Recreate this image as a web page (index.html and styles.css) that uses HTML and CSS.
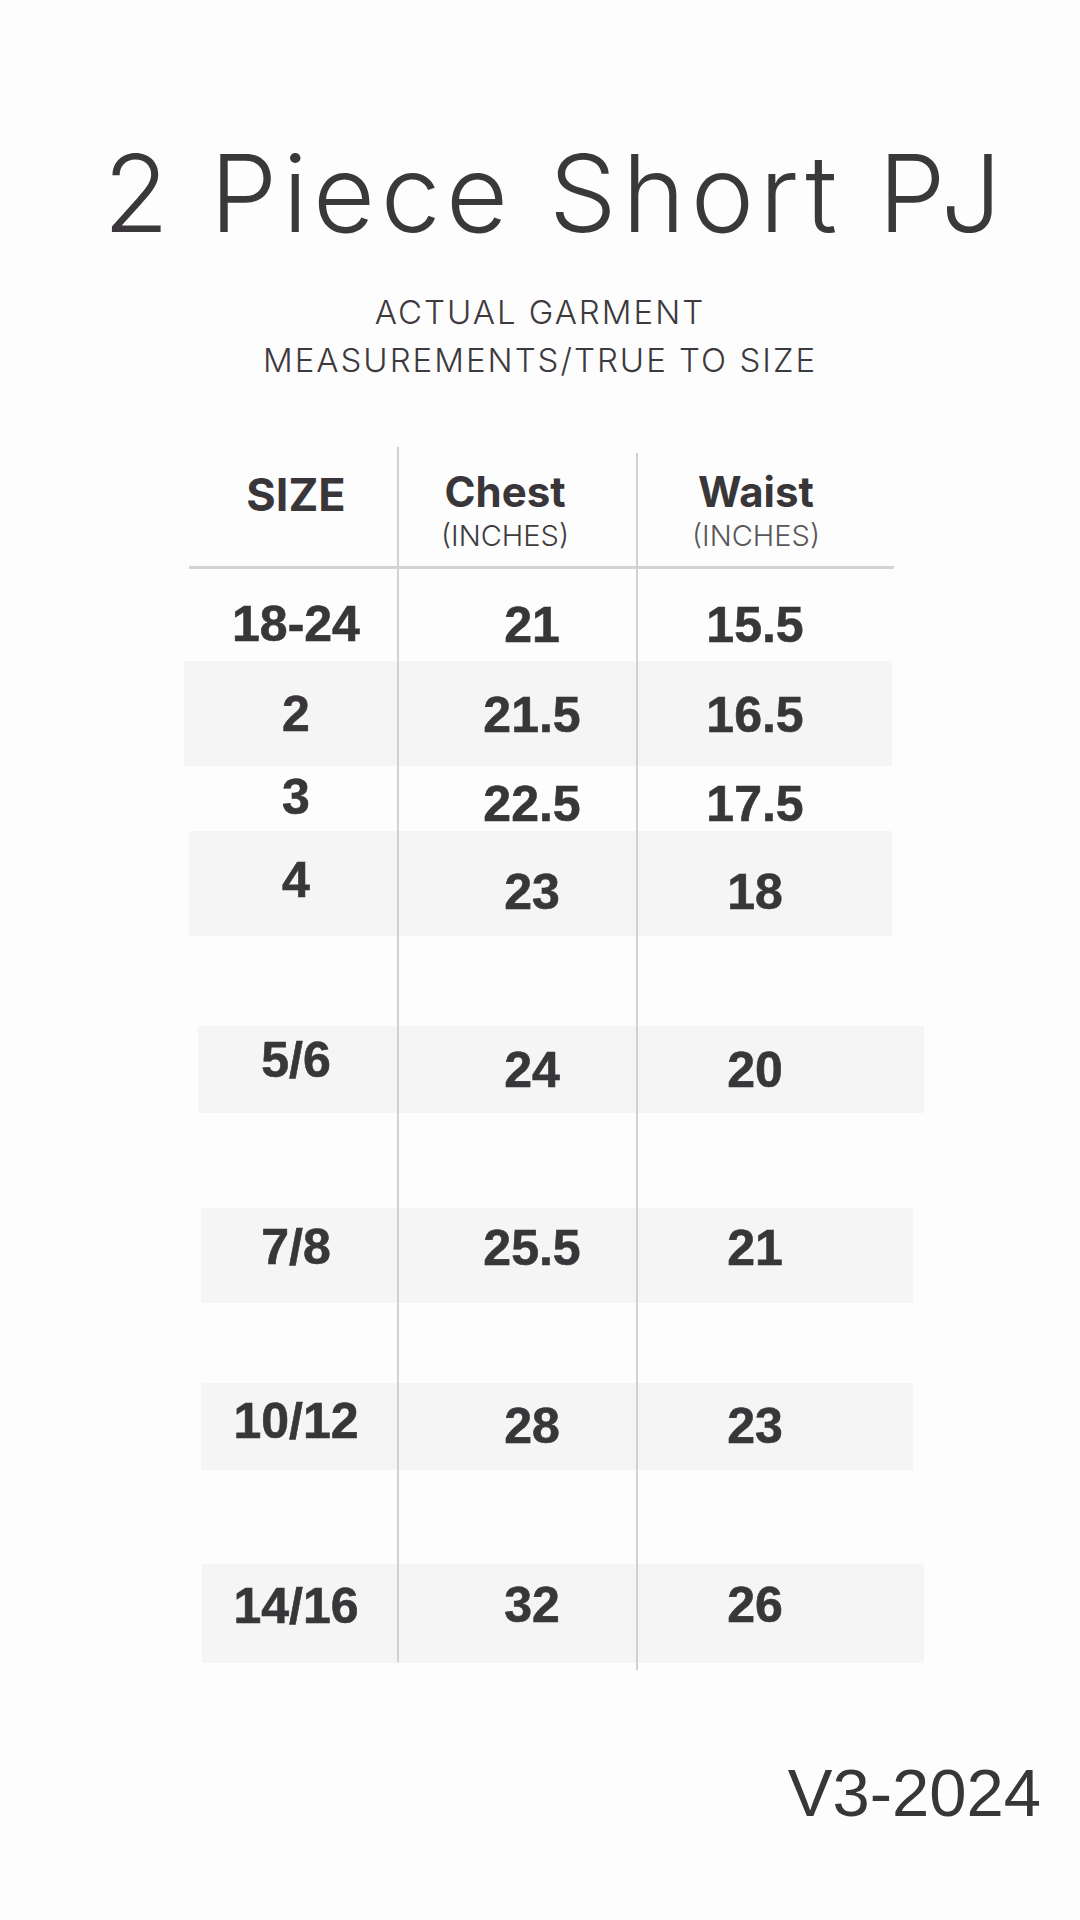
FILE: index.html
```html
<!DOCTYPE html>
<html lang="en">
<head>
<meta charset="utf-8">
<title>2 Piece Short PJ</title>
<link rel="stylesheet" href="styles.css">
</head>
<body>
<main class="page">
  <h1 class="title">2 Piece Short PJ</h1>
  <p class="subtitle">ACTUAL GARMENT<br>MEASUREMENTS/TRUE TO SIZE</p>

  <section class="table">
    <div class="vline vline-1"></div>
    <div class="vline vline-2"></div>

    <div class="head">
      <div class="hcell hsize">SIZE</div>
      <div class="hcell hchest"><span class="hname">Chest</span><span class="unit">(INCHES)</span></div>
      <div class="hcell hwaist"><span class="hname">Waist</span><span class="unit unit-light">(INCHES)</span></div>
    </div>
    <div class="head-rule"></div>

    <div class="row r1"><div class="c size">18-24</div><div class="c chest">21</div><div class="c waist">15.5</div></div>
    <div class="row r2 shade"><div class="c size">2</div><div class="c chest">21.5</div><div class="c waist">16.5</div></div>
    <div class="row r3"><div class="c size">3</div><div class="c chest">22.5</div><div class="c waist">17.5</div></div>
    <div class="row r4 shade"><div class="c size">4</div><div class="c chest">23</div><div class="c waist">18</div></div>
    <div class="row r5 shade"><div class="c size">5/6</div><div class="c chest">24</div><div class="c waist">20</div></div>
    <div class="row r6 shade"><div class="c size">7/8</div><div class="c chest">25.5</div><div class="c waist">21</div></div>
    <div class="row r7 shade"><div class="c size">10/12</div><div class="c chest">28</div><div class="c waist">23</div></div>
    <div class="row r8 shade"><div class="c size">14/16</div><div class="c chest">32</div><div class="c waist">26</div></div>
  </section>

  <div class="version">V3-2024</div>
</main>
</body>
</html>
```

FILE: styles.css
```css
* { box-sizing: border-box; }

html, body {
  margin: 0;
  padding: 0;
  background: #fdfdfd;
}

body {
  width: 1080px;
  height: 1920px;
  overflow: hidden;
  color: #3b383b;
  font-family: "Inter", "Liberation Sans", sans-serif;
}

.page {
  display: flex;
  flex-direction: column;
  padding-top: 140px;
}

.title {
  margin: 0;
  font-family: "Inter", sans-serif;
  font-weight: 300;
  font-size: 107px;
  line-height: 1;
  letter-spacing: 5.5px;
  text-align: center;
  padding-left: 30px;
  color: #3a383b;
}

.subtitle {
  margin: 41px 0 0;
  font-family: "Inter", sans-serif;
  font-weight: 300;
  font-size: 33px;
  line-height: 48px;
  letter-spacing: 2px;
  text-align: center;
  color: #3d3a3d;
}

.table {
  position: relative;
  margin: 63px 0 0 184px;
  width: 740px;
  display: flex;
  flex-direction: column;
}

.vline {
  position: absolute;
  width: 2px;
  background: #cfd3d0;
  z-index: 2;
}
.vline-1 { left: 213px; top: 0; height: 1215px; }
.vline-2 { left: 452px; top: 6px; height: 1217px; }

.head {
  display: grid;
  grid-template-columns: 213px 240px 1fr;
  height: 119px;
  align-items: start;
}

.hcell {
  display: flex;
  flex-direction: column;
  align-items: center;
  font-weight: 700;
  color: #39363a;
}

.hsize {
  font-size: 45px;
  line-height: 1;
  padding-top: 25px;
  padding-left: 11px;
}

.hchest { padding-right: 24px; padding-top: 20px; }
.hwaist { padding-right: 49px; padding-top: 20px; }

.hname {
  font-size: 42px;
  line-height: 1.2;
}

.unit {
  margin-top: 2px;
  font-size: 29px;
  line-height: 1.2;
  font-weight: 300;
  color: #3f3c3f;
}
.unit-light { color: #5a575a; }

.head-rule {
  height: 3px;
  margin: 0 30px 0 5px;
  background: #d2d4d2;
}

.row {
  position: relative;
  isolation: isolate;
  display: grid;
  grid-template-columns: 213px 240px 1fr;
  align-items: start;
  font-family: "Liberation Sans", Arial, sans-serif;
  font-weight: 700;
  font-size: 50px;
  line-height: 1;
  color: #39363a;
  -webkit-text-stroke: 0.6px #39363a;
  --ml: 0px;
  --mr: 0px;
}

.row.shade::before {
  content: "";
  position: absolute;
  top: 0;
  bottom: 0;
  left: var(--ml);
  right: var(--mr);
  background: #f5f5f5;
  z-index: -1;
}

.c { text-align: center; }
.size { padding-top: var(--ts); padding-left: 11px; }
.chest { padding-top: var(--tv); padding-left: 30px; }
.waist { padding-top: var(--tv); padding-right: 51px; }

.r1 { height: 92px;  --ts: 30px; --tv: 31px; }
.r2 { height: 105px; --ts: 28px; --tv: 29px; --ml: 0px;  --mr: 32px; }
.r3 { height: 65px;  --ts: 6px;  --tv: 13px; }
.r4 { height: 105px; --ts: 24px; --tv: 36px; --ml: 5px;  --mr: 32px; }
.r5 { height: 87px;  --ts: 9px;  --tv: 19px; --ml: 14px; --mr: 0px;  margin-top: 90px; }
.r6 { height: 95px;  --ts: 14px; --tv: 15px; --ml: 17px; --mr: 11px; margin-top: 95px; }
.r7 { height: 87px;  --ts: 13px; --tv: 18px; --ml: 17px; --mr: 11px; margin-top: 80px; }
.r8 { height: 99px;  --ts: 17px; --tv: 16px; --ml: 18px; --mr: 0px;  margin-top: 94px; }

.version {
  margin-top: 96px;
  padding-right: 39px;
  text-align: right;
  font-family: "Liberation Sans", Arial, sans-serif;
  font-weight: 400;
  font-size: 67px;
  line-height: 1;
  color: #39363a;
}
```
